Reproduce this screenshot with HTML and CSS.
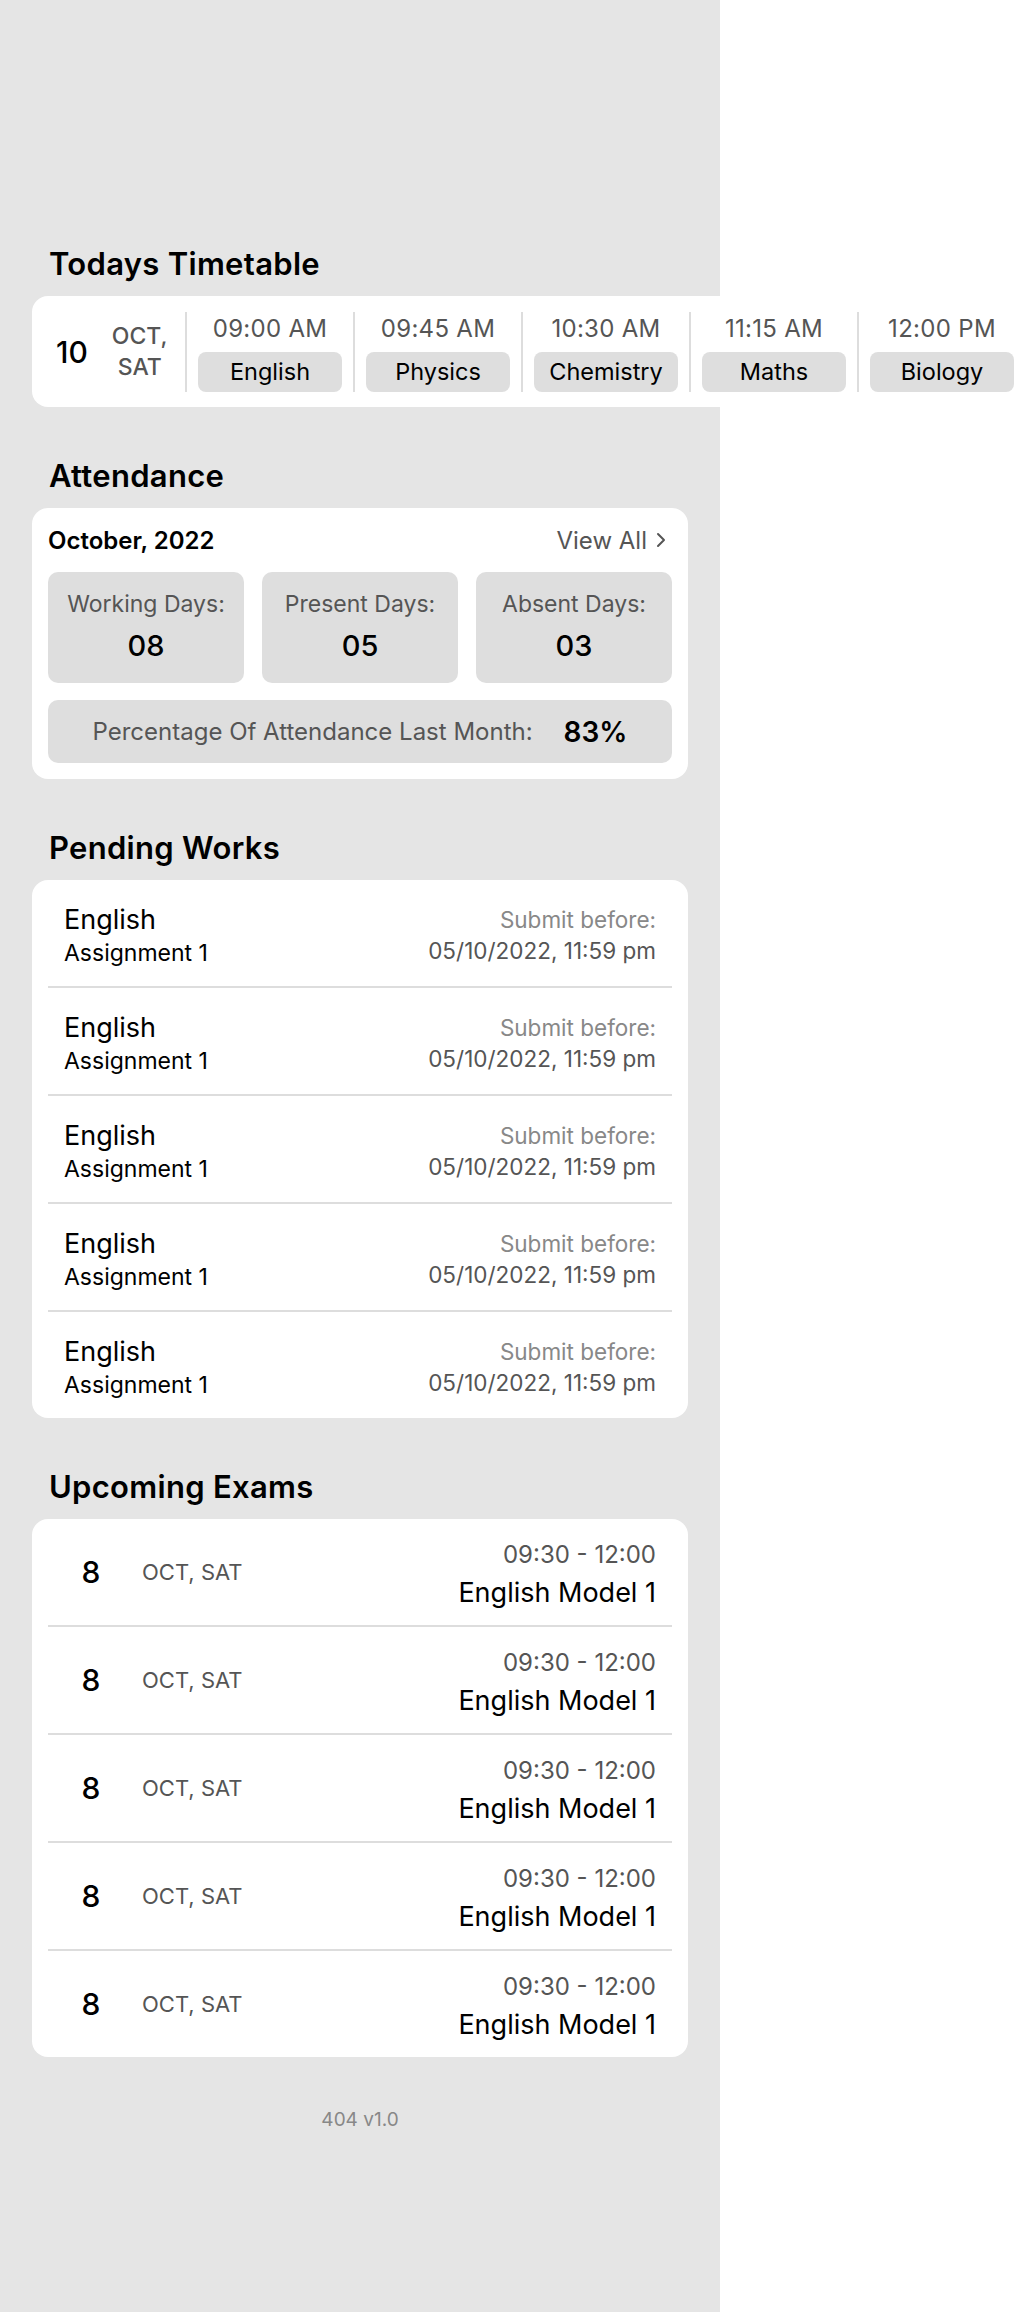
FILE: index.html
```html
<!DOCTYPE html>
<html lang="en">
<head>
<meta charset="utf-8">
<title>Dashboard</title>
<link rel="stylesheet" href="styles.css">
</head>
<body>
<main class="panel">
  <section class="section">
    <h2 class="section-title">Todays Timetable</h2>
    <div class="tt-card">
      <div class="tt-date">
        <span class="tt-day">10</span>
        <span class="tt-sub">OCT,<br>SAT</span>
      </div>
      <div class="tt-slot"><div class="tt-time">09:00 AM</div><div class="tt-chip">English</div></div>
      <div class="tt-slot"><div class="tt-time">09:45 AM</div><div class="tt-chip">Physics</div></div>
      <div class="tt-slot"><div class="tt-time">10:30 AM</div><div class="tt-chip">Chemistry</div></div>
      <div class="tt-slot"><div class="tt-time">11:15 AM</div><div class="tt-chip">Maths</div></div>
      <div class="tt-slot"><div class="tt-time">12:00 PM</div><div class="tt-chip">Biology</div></div>
    </div>
  </section>

  <section class="section">
    <h2 class="section-title">Attendance</h2>
    <div class="card att-card">
      <div class="att-head">
        <span class="att-month">October, 2022</span>
        <span class="att-link">View All
          <svg class="chev" width="10" height="16" viewBox="0 0 10 16"><polyline points="2,2 8,8 2,14" fill="none" stroke="#555" stroke-width="2" stroke-linecap="round" stroke-linejoin="round"/></svg>
        </span>
      </div>
      <div class="att-stats">
        <div class="stat"><div class="stat-label">Working Days:</div><div class="stat-value">08</div></div>
        <div class="stat"><div class="stat-label">Present Days:</div><div class="stat-value">05</div></div>
        <div class="stat"><div class="stat-label">Absent Days:</div><div class="stat-value">03</div></div>
      </div>
      <div class="att-pct">
        <span class="pct-label">Percentage Of Attendance Last Month:</span>
        <span class="pct-value">83%</span>
      </div>
    </div>
  </section>

  <section class="section">
    <h2 class="section-title">Pending Works</h2>
    <div class="card list-card">
      <div class="row work">
        <div class="work-left"><div class="work-subject">English</div><div class="work-name">Assignment 1</div></div>
        <div class="work-right"><div class="work-due-label">Submit before:</div><div class="work-due">05/10/2022, 11:59 pm</div></div>
      </div>
      <div class="row work">
        <div class="work-left"><div class="work-subject">English</div><div class="work-name">Assignment 1</div></div>
        <div class="work-right"><div class="work-due-label">Submit before:</div><div class="work-due">05/10/2022, 11:59 pm</div></div>
      </div>
      <div class="row work">
        <div class="work-left"><div class="work-subject">English</div><div class="work-name">Assignment 1</div></div>
        <div class="work-right"><div class="work-due-label">Submit before:</div><div class="work-due">05/10/2022, 11:59 pm</div></div>
      </div>
      <div class="row work">
        <div class="work-left"><div class="work-subject">English</div><div class="work-name">Assignment 1</div></div>
        <div class="work-right"><div class="work-due-label">Submit before:</div><div class="work-due">05/10/2022, 11:59 pm</div></div>
      </div>
      <div class="row work">
        <div class="work-left"><div class="work-subject">English</div><div class="work-name">Assignment 1</div></div>
        <div class="work-right"><div class="work-due-label">Submit before:</div><div class="work-due">05/10/2022, 11:59 pm</div></div>
      </div>
    </div>
  </section>

  <section class="section">
    <h2 class="section-title">Upcoming Exams</h2>
    <div class="card list-card">
      <div class="row exam">
        <div class="exam-left"><span class="exam-day">8</span><span class="exam-sub">OCT, SAT</span></div>
        <div class="exam-right"><div class="exam-time">09:30 - 12:00</div><div class="exam-name">English Model 1</div></div>
      </div>
      <div class="row exam">
        <div class="exam-left"><span class="exam-day">8</span><span class="exam-sub">OCT, SAT</span></div>
        <div class="exam-right"><div class="exam-time">09:30 - 12:00</div><div class="exam-name">English Model 1</div></div>
      </div>
      <div class="row exam">
        <div class="exam-left"><span class="exam-day">8</span><span class="exam-sub">OCT, SAT</span></div>
        <div class="exam-right"><div class="exam-time">09:30 - 12:00</div><div class="exam-name">English Model 1</div></div>
      </div>
      <div class="row exam">
        <div class="exam-left"><span class="exam-day">8</span><span class="exam-sub">OCT, SAT</span></div>
        <div class="exam-right"><div class="exam-time">09:30 - 12:00</div><div class="exam-name">English Model 1</div></div>
      </div>
      <div class="row exam">
        <div class="exam-left"><span class="exam-day">8</span><span class="exam-sub">OCT, SAT</span></div>
        <div class="exam-right"><div class="exam-time">09:30 - 12:00</div><div class="exam-name">English Model 1</div></div>
      </div>
    </div>
  </section>

  <footer class="version">404 v1.0</footer>
</main>
</body>
</html>
```

FILE: styles.css
```css
* { box-sizing: border-box; }

html, body {
  margin: 0;
  padding: 0;
  background: #ffffff;
}

body {
  font-family: "Inter", "Noto Sans", sans-serif;
  color: #000;
}

.panel {
  width: 720px;
  min-height: 2312px;
  background: #e5e5e5;
  padding: 244px 32px 0 32px;
}

.section + .section { margin-top: 49px; }

.section-title {
  margin: 0 0 12px 17px;
  font-size: 31px;
  line-height: 40px;
  font-weight: 600;
  letter-spacing: 0.3px;
}

.card {
  background: #fff;
  border-radius: 16px;
}

/* Timetable */
.tt-card {
  display: flex;
  width: max-content;
  background: #fff;
  border-radius: 16px;
  padding: 16px 12px 15px 24px;
}

.tt-date {
  display: flex;
  align-items: center;
  width: 129px;
  flex: none;
}

.tt-day {
  font-size: 30px;
  font-weight: 500;
  line-height: 40px;
}

.tt-sub {
  margin-left: 24px;
  font-size: 23px;
  line-height: 31px;
  font-weight: 500;
  color: #555;
  text-align: center;
}

.tt-slot {
  border-left: 2px solid #dddddd;
  padding: 0 11px;
  height: 80px;
}

.tt-time {
  font-size: 24px;
  line-height: 33px;
  color: #555;
  text-align: center;
  letter-spacing: 0.3px;
}

.tt-chip {
  margin-top: 7px;
  width: 144px;
  height: 40px;
  border-radius: 8px;
  background: #dedede;
  font-size: 23.5px;
  line-height: 40px;
  text-align: center;
}

/* Attendance */
.att-card { padding: 16px; }

.att-head {
  display: flex;
  justify-content: space-between;
  align-items: center;
  height: 32px;
  margin-bottom: 16px;
}

.att-month {
  font-size: 24px;
  font-weight: 600;
}

.att-link {
  display: flex;
  align-items: center;
  gap: 9px;
  font-size: 24px;
  color: #555;
  padding-right: 6px;
}

.att-stats {
  display: grid;
  grid-template-columns: repeat(3, 1fr);
  gap: 18px;
}

.stat {
  height: 111px;
  background: #dedede;
  border-radius: 10px;
  padding-top: 14px;
  text-align: center;
}

.stat-label {
  font-size: 23px;
  line-height: 36px;
  color: #555;
}

.stat-value {
  font-size: 29px;
  line-height: 48px;
  font-weight: 500;
}

.att-pct {
  margin-top: 17px;
  height: 63px;
  background: #dedede;
  border-radius: 10px;
  display: flex;
  align-items: center;
  justify-content: center;
  gap: 31px;
}

.pct-label {
  font-size: 24px;
  color: #555;
}

.pct-value {
  font-size: 28px;
  font-weight: 600;
}

/* Lists */
.list-card { padding: 0 16px; }

.row {
  display: flex;
  justify-content: space-between;
  align-items: center;
  height: 108px;
  padding: 0 16px;
  border-bottom: 2px solid #dddddd;
}

.row:last-child {
  border-bottom: 0;
  height: 106px;
}

.work { padding-top: 5px; }

.work-subject {
  font-size: 27px;
  line-height: 34px;
}

.work-name {
  font-size: 23px;
  line-height: 32px;
}

.work-right { text-align: right; }

.work-due-label {
  font-size: 22.5px;
  line-height: 30px;
  color: #888;
}

.work-due {
  font-size: 22.5px;
  line-height: 32px;
  color: #555;
}

.exam-left {
  display: flex;
  align-items: center;
}

.exam-day {
  width: 54px;
  text-align: center;
  font-size: 30px;
  font-weight: 500;
}

.exam-sub {
  margin-left: 24px;
  font-size: 22px;
  color: #555;
}

.exam-right {
  text-align: right;
  margin-top: 6px;
}

.exam-time {
  font-size: 24px;
  line-height: 36px;
  color: #555;
}

.exam-name {
  font-size: 27px;
  line-height: 40px;
}

.version {
  margin-top: 51px;
  text-align: center;
  font-size: 19px;
  line-height: 24px;
  color: #888;
}
```
